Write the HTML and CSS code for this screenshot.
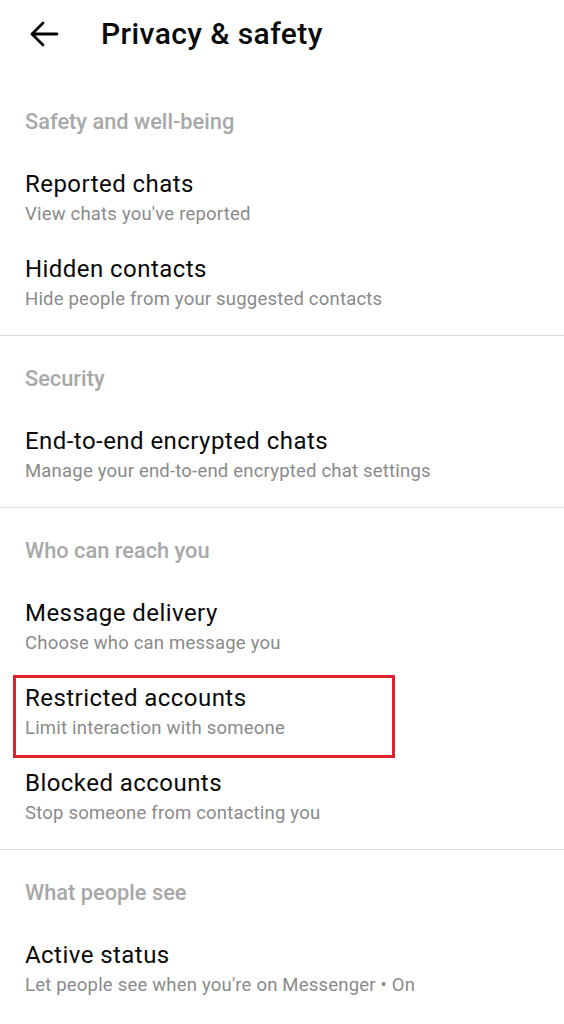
FILE: index.html
```html
<!DOCTYPE html>
<html lang="en">
<head>
    <meta charset="UTF-8">
    <meta name="viewport" content="width=device-width, initial-scale=1.0">
    <title>Privacy &amp; safety</title>
    <link rel="stylesheet" href="styles.css">
</head>
<body>

<!-- top bar -->
<div class="topbar">
    <svg class="back" width="30" height="26" viewBox="0 0 30 26">
        <path d="M28 13H3M14 2L3 13l11 11" fill="none" stroke="#000" stroke-width="2.8" stroke-linecap="round" stroke-linejoin="round"/>
    </svg>
    <h1 class="title">Privacy &amp; safety</h1>
</div>

<div class="section">
    <div class="section-head">Safety and well-being</div>
    <div class="item">
        <div class="item-title">Reported chats</div>
        <div class="item-sub">View chats you've reported</div>
    </div>
    <div class="item">
        <div class="item-title">Hidden contacts</div>
        <div class="item-sub">Hide people from your suggested contacts</div>
    </div>
</div>

<div class="section">
    <div class="section-head">Security</div>
    <div class="item">
        <div class="item-title">End-to-end encrypted chats</div>
        <div class="item-sub">Manage your end-to-end encrypted chat settings</div>
    </div>
</div>

<div class="section">
    <div class="section-head">Who can reach you</div>
    <div class="item">
        <div class="item-title">Message delivery</div>
        <div class="item-sub">Choose who can message you</div>
    </div>
    <div class="item highlighted">
        <div class="item-title">Restricted accounts</div>
        <div class="item-sub">Limit interaction with someone</div>
    </div>
    <div class="item">
        <div class="item-title">Blocked accounts</div>
        <div class="item-sub">Stop someone from contacting you</div>
    </div>
</div>

<div class="section last">
    <div class="section-head">What people see</div>
    <div class="item">
        <div class="item-title">Active status</div>
        <div class="item-sub">Let people see when you're on Messenger • On</div>
    </div>
</div>

</body>
</html>
```

FILE: styles.css
```css
/* base */
body {
    margin: 0;
    padding: 0;
    font-family: Roboto, "Noto Sans", Arial, sans-serif;
    background-color: #ffffff;
    color: #0a0a0a;
}

/* top bar */
.topbar {
    display: flex;
    align-items: center;
    height: 40px;
    padding: 14px 0 25px 29px;
}

.back {
    display: block;
}

.title {
    margin: 0 0 0 42px;
    font-size: 30px;
    font-weight: 500;
    line-height: 40px;
    letter-spacing: 0.4px;
}

/* sections */
.section {
    padding: 28px 0 10px;
    border-bottom: 1px solid #dedede;
}

.section.last {
    border-bottom: none;
}

.section-head {
    padding: 0 25px;
    margin-bottom: 18px;
    font-size: 21.8px;
    font-weight: 500;
    line-height: 30px;
    color: #a8a8a8;
}

/* rows */
.item {
    position: relative;
    padding: 14px 25px 11px;
}

.item-title {
    font-size: 24px;
    line-height: 30px;
    letter-spacing: 0.45px;
}

.item-sub {
    font-size: 18.5px;
    line-height: 30px;
    color: #8a8a8a;
    letter-spacing: 0.2px;
}

/* red annotation box */
.highlighted::after {
    content: "";
    position: absolute;
    left: 13px;
    top: 6px;
    width: 376px;
    height: 77px;
    border: 3px solid #e1212e;
}
```
